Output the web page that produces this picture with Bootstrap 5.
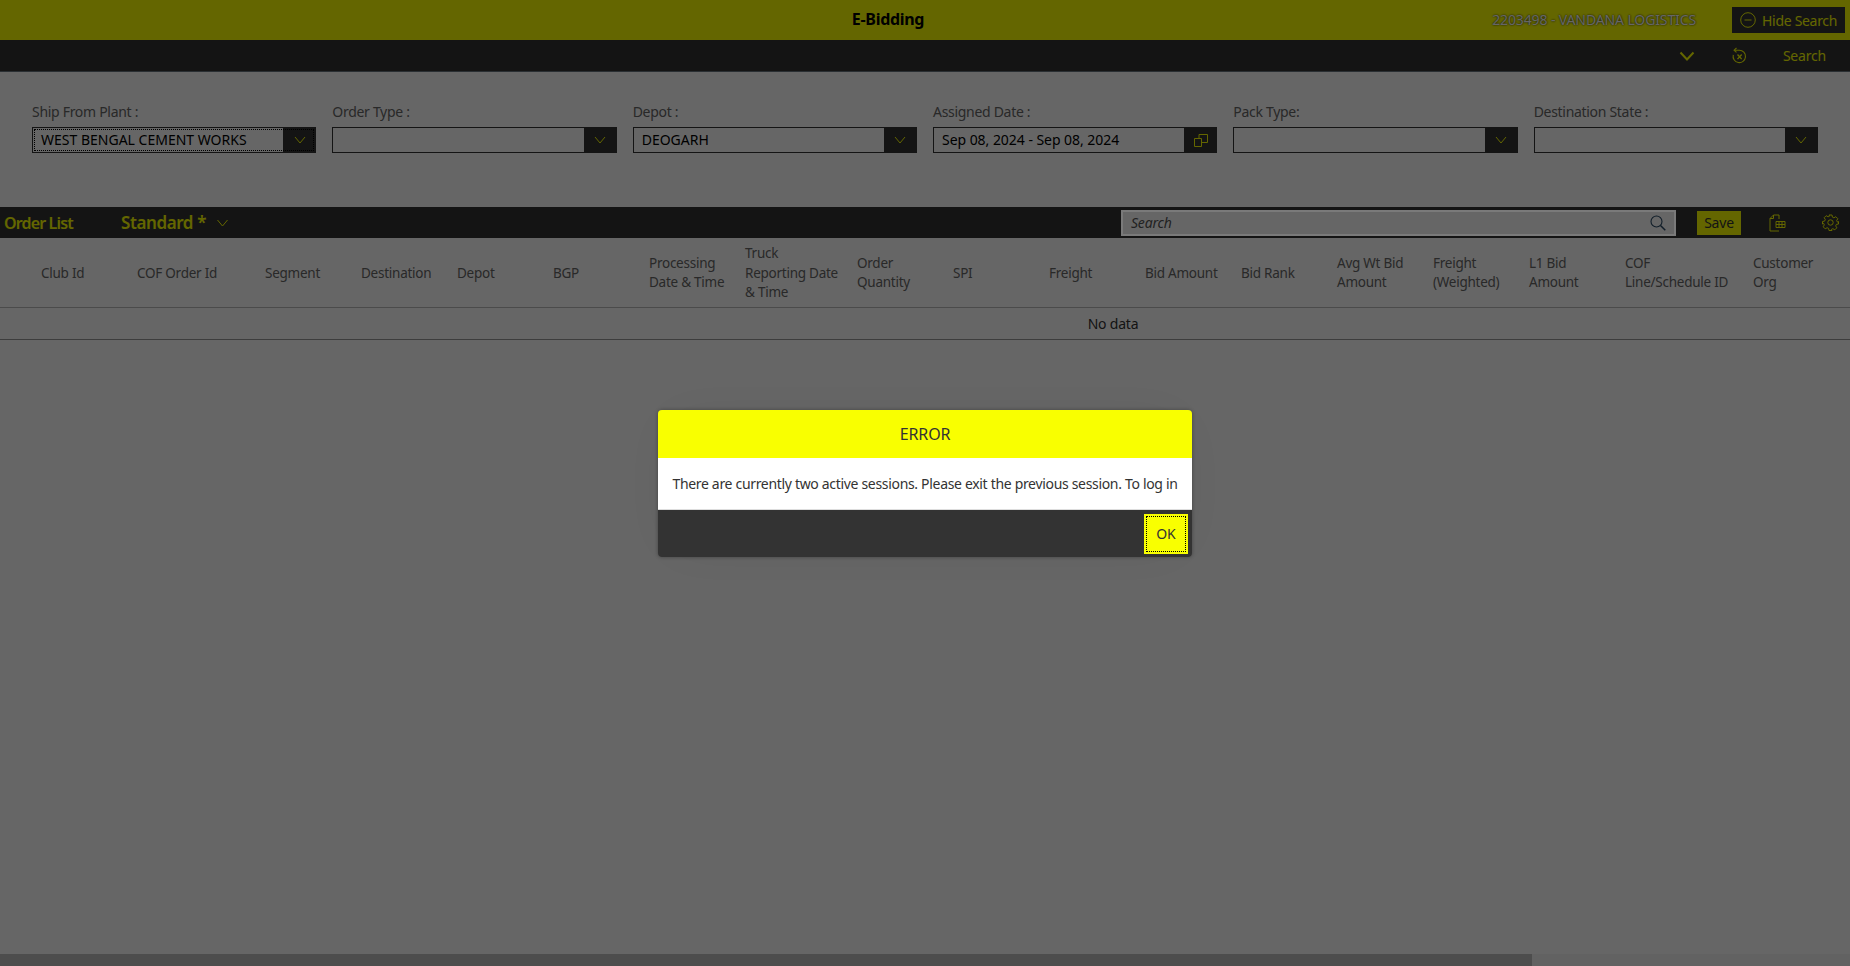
<!DOCTYPE html>
<html lang="en">
<head>
<meta charset="utf-8">
<title>E-Bidding</title>
<link href="https://cdn.jsdelivr.net/npm/bootstrap@5.3.0/dist/css/bootstrap.min.css" rel="stylesheet">
<style>
html, body { height: 100%; overflow: hidden; }
body { font-family: "Noto Sans", "Liberation Sans", sans-serif; font-size: 14px; color: #333; background: #fff; letter-spacing: -.2px; }
.eb-page { height: 966px; overflow: hidden; }
.eb-top { height: 40px; background: #f9ff00; padding: 0 5px 0 0; }
.eb-title { font-size: 16px; font-weight: 700; color: #000; left: 888px; transform: translateX(-50%); top: 7px; letter-spacing: -.3px; }
.eb-user { color: #fff; font-size: 14px; margin: 0 36px 2px 0; text-shadow: 0 0 2px #000; letter-spacing: -.12px; }
.eb-hide { background: #333; color: #f9ff00; border-radius: 0; height: 26px; width: 113px; padding: 0 0 0 8px; font-size: 14px; gap: 6px; border: 0; letter-spacing: -.3px; }
.eb-sub { height: 32px; background: #333; border-bottom: 1px solid #6a7780; color: #f9ff00; }
.eb-sub-chev { width: 16px; margin-right: 36px; }
.eb-sub-undo { width: 17px; margin-right: 35px; }
.eb-sub-search { margin-right: 24px; }
.eb-filters { height: 135px; padding: 31px 24px 0 24px; }
.eb-fcol { width: 16.6667%; padding: 0 8px; }
.eb-label { color: #666; height: 24px; line-height: 18px; margin-bottom: 0; display: block; letter-spacing: -.3px; }
.eb-field { height: 26px; border: 1px solid #333; background: #fff; color: #000; }
.eb-focus { outline: 1px dotted #000; outline-offset: -3px; }
.eb-value { padding-left: 8px; line-height: 24px; white-space: nowrap; letter-spacing: -.04px; }
.eb-value-caps { letter-spacing: 0; }
.eb-arrow { width: 33px; background: #333; color: #f9ff00; margin: -1px -1px -1px 0; flex-shrink: 0; }
.eb-bar { height: 31px; background: #333; color: #f9ff00; }
.eb-olist { font-weight: 600; font-size: 16px; margin-left: 4px; width: 117px; letter-spacing: -.85px; }
.eb-std { font-weight: 600; font-size: 17px; letter-spacing: -.4px; margin-right: 10px; }
.eb-searchbox { width: 555px; height: 26px; background: #fff; padding: 0 10px; margin-right: 21px; color: #555; font-style: italic; position: relative; }
.eb-searchbox::after { content: ""; position: absolute; inset: 0; border: 2px solid #7a7a7a; z-index: 11; pointer-events: none; }
.eb-save { background: #f9ff00; color: #333; width: 44px; height: 24px; padding: 0; margin-right: 28px; font-size: 14px; border: 0; border-radius: 0; letter-spacing: -.2px; }
.eb-ico-table { margin-right: 36px; }
.eb-ico-gear { margin-right: 11px; }
.eb-table { table-layout: fixed; width: 2226px; margin: 0; border-collapse: collapse; }
.eb-w32 { width: 32px; }
.eb-w96 { width: 96px; }
.eb-w112 { width: 112px; }
.eb-w128 { width: 128px; }
.eb-w386 { width: 386px; }
.eb-table th { font-weight: 400; font-size: 13.5px; letter-spacing: -.25px; color: #666; padding: 2px 9px 0; height: 69px; vertical-align: middle; line-height: 19.5px; border-bottom: 1px solid #bbb; background: #fff; }
.eb-table td { text-align: center; height: 32px; padding: 0; color: #333; border-bottom: 1px solid #999; }
.eb-track { height: 12px; background: #f4f4f4; }
.eb-thumb { width: 1532px; background: #c1c1c1; }
.eb-overlay { position: fixed; inset: 0; background: rgba(0,0,0,.6); z-index: 10; }
.eb-dialog { position: fixed; z-index: 11; left: 658px; top: 410px; width: 534px; border-radius: 4px; overflow: hidden; }
.eb-halo { position: fixed; z-index: 10; left: 658px; top: 410px; width: 534px; height: 147px; border-radius: 4px; box-shadow: 0 0 4px rgba(0,0,0,.35), 0 0 64px rgba(0,0,0,.05); }
.eb-dhead { height: 48px; background: #f9ff00; font-size: 16px; color: #333; letter-spacing: -.1px; }
.eb-dbody { height: 51px; background: #fff; color: #333; letter-spacing: -.32px; }
.eb-dfoot { height: 48px; background: #333; border-top: 1px solid #ddd; padding-right: 4px; }
.eb-ok { width: 44px; height: 40px; background: #f9ff00; color: #333; font-size: 14px; border: 0; border-radius: 0; padding: 0; outline: 1px dotted #000; outline-offset: -3px; }
</style>
</head>
<body>
<div class="eb-page d-flex flex-column">
  <header class="eb-top d-flex align-items-center justify-content-end position-relative flex-shrink-0">
    <div class="eb-title position-absolute">E-Bidding</div>
    <div class="eb-user">2203498 - VANDANA LOGISTICS</div>
    <button type="button" class="btn eb-hide d-flex align-items-center">
      <svg width="16" height="16" viewBox="0 0 16 16" fill="none" stroke="currentColor" stroke-width="1"><circle cx="8" cy="8" r="7.3"/><path d="M4.5 8h7"/></svg>
      Hide Search
    </button>
  </header>
  <div class="eb-sub d-flex align-items-center justify-content-end flex-shrink-0">
    <svg class="eb-sub-chev" height="10" viewBox="0 0 16 10" fill="none" stroke="currentColor" stroke-width="2"><path d="M1.500 1.500l6.500 7 6.500-7"/></svg>
    <svg class="eb-sub-undo" height="18" viewBox="0 0 16 18" fill="none" stroke="currentColor" stroke-width="1.1"><path d="M5 1L2.600 3.200 5 5.400"/><path d="M3 3.200h4.800a6.200 6.200 0 1 1-6 4.600"/><path d="M6 7.500l4.200 4.600M10.200 7.500L6 12.100" stroke-width="1.400"/></svg>
    <span class="eb-sub-search">Search</span>
  </div>
  <section class="eb-filters d-flex flex-shrink-0">
    <div class="eb-fcol">
      <label class="eb-label">Ship From Plant :</label>
      <div class="eb-field eb-focus d-flex"><div class="eb-value eb-value-caps flex-grow-1">WEST BENGAL CEMENT WORKS</div><div class="eb-arrow d-flex align-items-center justify-content-center"><svg width="12" height="8" viewBox="0 0 12 8" fill="none" stroke="currentColor"><path d="M1 1l5 6 5-6"/></svg></div></div>
    </div>
    <div class="eb-fcol">
      <label class="eb-label">Order Type :</label>
      <div class="eb-field d-flex"><div class="eb-value flex-grow-1"></div><div class="eb-arrow d-flex align-items-center justify-content-center"><svg width="12" height="8" viewBox="0 0 12 8" fill="none" stroke="currentColor"><path d="M1 1l5 6 5-6"/></svg></div></div>
    </div>
    <div class="eb-fcol">
      <label class="eb-label">Depot :</label>
      <div class="eb-field d-flex"><div class="eb-value eb-value-caps flex-grow-1">DEOGARH</div><div class="eb-arrow d-flex align-items-center justify-content-center"><svg width="12" height="8" viewBox="0 0 12 8" fill="none" stroke="currentColor"><path d="M1 1l5 6 5-6"/></svg></div></div>
    </div>
    <div class="eb-fcol">
      <label class="eb-label">Assigned Date :</label>
      <div class="eb-field d-flex"><div class="eb-value flex-grow-1">Sep 08, 2024 - Sep 08, 2024</div><div class="eb-arrow d-flex align-items-center justify-content-center"><svg width="16" height="16" viewBox="0 0 16 16" fill="none" stroke="currentColor"><path d="M1.500 6.500h7v8h-7zM6 6.500V2.500h8.500v8H8.500"/></svg></div></div>
    </div>
    <div class="eb-fcol">
      <label class="eb-label">Pack Type:</label>
      <div class="eb-field d-flex"><div class="eb-value flex-grow-1"></div><div class="eb-arrow d-flex align-items-center justify-content-center"><svg width="12" height="8" viewBox="0 0 12 8" fill="none" stroke="currentColor"><path d="M1 1l5 6 5-6"/></svg></div></div>
    </div>
    <div class="eb-fcol">
      <label class="eb-label">Destination State :</label>
      <div class="eb-field d-flex"><div class="eb-value flex-grow-1"></div><div class="eb-arrow d-flex align-items-center justify-content-center"><svg width="12" height="8" viewBox="0 0 12 8" fill="none" stroke="currentColor"><path d="M1 1l5 6 5-6"/></svg></div></div>
    </div>
  </section>
  <div class="eb-bar d-flex align-items-center flex-shrink-0">
    <div class="eb-olist">Order List</div>
    <div class="eb-std">Standard *</div>
    <svg width="13" height="8" viewBox="0 0 12 8" fill="none" stroke="currentColor"><path d="M1 1l5 6 5-6"/></svg>
    <div class="flex-grow-1"></div>
    <div class="eb-searchbox d-flex align-items-center justify-content-between">
      <span>Search</span>
      <svg width="16" height="16" viewBox="0 0 16 16" fill="none" stroke="#2a4a66" stroke-width="1.1"><circle cx="6.500" cy="6.500" r="5.500"/><path d="M10.500 10.500l4.800 4.800" stroke-width="1.500"/></svg>
    </div>
    <button type="button" class="btn eb-save">Save</button>
    <svg class="eb-ico-table" width="17" height="18" viewBox="0 0 17 18" fill="none" stroke="currentColor"><path d="M10 5V1H4.500L1 4.500V17h9M4.500 1v3.500H1"/><path d="M7 7.500h9v6H7zM7 10.500h9M10 7.500v6M13 7.500v6"/></svg>
    <svg class="eb-ico-gear" width="17" height="17" viewBox="0 0 17 17" fill="none" stroke="currentColor"><circle cx="8.500" cy="8.500" r="2.700"/><path d="M7 1h3l.4 2.100 1.500.7 1.900-1.100 2 2-1.100 1.900.7 1.500L16.500 7.500v2.500l-2.100.4-.7 1.500 1.100 1.900-2 2-1.900-1.100-1.500.7L10 16.500H7l-.4-2.100-1.500-.7-1.900 1.100-2-2 1.100-1.900-.7-1.500L.5 10V7.500l2.100-.4.7-1.500-1.100-1.900 2-2 1.900 1.100 1.500-.7z"/></svg>
  </div>
  <div class="overflow-hidden flex-shrink-0">
    <table class="eb-table">
      <colgroup>
        <col class="eb-w32"><col class="eb-w96"><col class="eb-w128"><col class="eb-w96"><col class="eb-w96"><col class="eb-w96"><col class="eb-w96"><col class="eb-w96"><col class="eb-w112"><col class="eb-w96"><col class="eb-w96"><col class="eb-w96"><col class="eb-w96"><col class="eb-w96"><col class="eb-w96"><col class="eb-w96"><col class="eb-w96"><col class="eb-w128"><col class="eb-w96"><col class="eb-w386">
      </colgroup>
      <thead>
        <tr>
          <th></th><th>Club Id</th><th>COF Order Id</th><th>Segment</th><th>Destination</th><th>Depot</th><th>BGP</th><th>Processing Date &amp; Time</th><th>Truck Reporting Date &amp; Time</th><th>Order Quantity</th><th>SPI</th><th>Freight</th><th>Bid Amount</th><th>Bid Rank</th><th>Avg Wt Bid Amount</th><th>Freight (Weighted)</th><th>L1 Bid Amount</th><th>COF Line/Schedule ID</th><th>Customer Org</th><th></th>
        </tr>
      </thead>
      <tbody>
        <tr><td colspan="20">No data</td></tr>
      </tbody>
    </table>
  </div>
  <div class="flex-grow-1"></div>
  <div class="eb-track d-flex flex-shrink-0"><div class="eb-thumb"></div></div>
</div>
<div class="eb-overlay"></div>
<div class="eb-halo"></div>
<div class="eb-dialog" role="dialog">
  <div class="eb-dhead d-flex align-items-center justify-content-center">ERROR</div>
  <div class="eb-dbody d-flex align-items-center justify-content-center">There are currently two active sessions. Please exit the previous session. To log in</div>
  <div class="eb-dfoot d-flex align-items-center justify-content-end"><button type="button" class="btn eb-ok">OK</button></div>
</div>
<script src="https://cdn.jsdelivr.net/npm/bootstrap@5.3.0/dist/js/bootstrap.bundle.min.js"></script>
</body>
</html>
